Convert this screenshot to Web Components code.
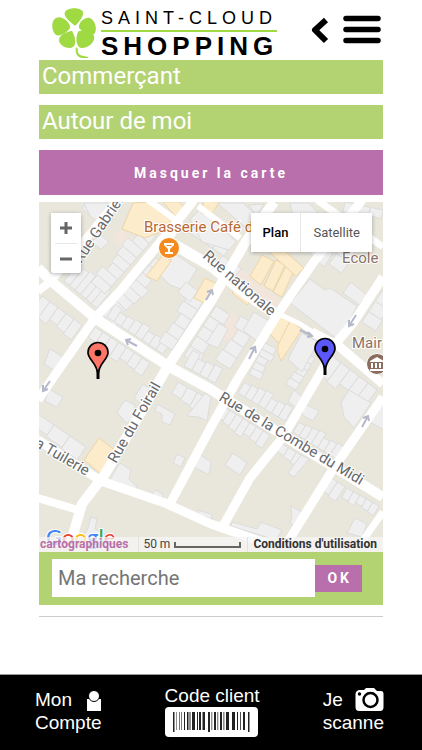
<!DOCTYPE html>
<html lang="fr">
<head>
<meta charset="utf-8">
<meta name="viewport" content="width=device-width, initial-scale=1">
<title>Saint-Cloud Shopping</title>
<style>
    :root {
        --green: #b3d272;
        --purple: #b86fab;
        --lime: #9fda43;
    }

    body {
        margin: 0;
        background: #fff;
        font-family: Roboto, "Liberation Sans", sans-serif;
    }
</style>
</head>
<body>
<shop-page>
    <shop-header slot="header"></shop-header>
    <title-bar>Commerçant</title-bar>
    <title-bar>Autour de moi</title-bar>
    <map-toggle>Masquer la carte</map-toggle>
    <div>
        <street-map></street-map>
        <search-bar placeholder="Ma recherche">OK</search-bar>
    </div>
    <shop-footer slot="footer"></shop-footer>
</shop-page>

<script>
class ShopPage extends HTMLElement {
    connectedCallback() {
        this.attachShadow({mode: 'open'}).innerHTML = `
            <style>
                :host {
                    display: flex;
                    flex-direction: column;
                    min-height: 100vh;
                }

                main {
                    display: flex;
                    flex-direction: column;
                    gap: 11px;
                    padding: 0 39px 24px;
                }

                hr {
                    width: 100%;
                    margin: 0;
                    border: 0;
                    border-top: 1px solid #ccc;
                }

                slot[name="footer"] {
                    display: block;
                    margin-top: auto;
                }
            </style>
            <slot name="header"></slot>
            <main>
                <slot></slot>
                <hr>
            </main>
            <slot name="footer"></slot>`;
    }
}

class ShopHeader extends HTMLElement {
    connectedCallback() {
        this.attachShadow({mode: 'open'}).innerHTML = `
            <style>
                :host {
                    display: flex;
                    justify-content: space-between;
                    height: 60px;
                    padding: 0 41px 0 51px;
                }

                a {
                    display: flex;
                    gap: 4px;
                    padding-top: 7px;
                    color: #000;
                    font-family: "Liberation Sans", Arial, sans-serif;
                    text-decoration: none;
                }

                a svg {
                    width: 46px;
                    height: 52px;
                }

                .name {
                    display: flex;
                    flex-direction: column;
                    white-space: nowrap;
                }

                .top {
                    border-bottom: 2px solid var(--lime);
                    margin-right: 4px;
                    font-size: 18px;
                    line-height: 23px;
                    letter-spacing: 5px;
                }

                .bottom {
                    font-size: 26px;
                    font-weight: bold;
                    line-height: 28px;
                    letter-spacing: 5px;
                }

                nav {
                    display: flex;
                    align-items: flex-start;
                    gap: 14px;
                    padding-top: 14px;
                }

                button {
                    display: block;
                    padding: 0;
                    border: 0;
                    background: none;
                }

                button svg {
                    display: block;
                }
            </style>
            <a href="#">
                <svg viewBox="51 7 46 52" fill="#9fda43" aria-hidden="true">
                    <path d="M74 25C69 21 63 16 65 12C68 7 81 7 83 12C84 16 79 22 76 25Q75 26 74 25Z"/>
                    <path d="M70 28C68 32 60 37 56 35C51 31 51 20 56 18C62 15 69 22 70 26Z"/>
                    <path d="M79 26C80 21 85 17 90 18C95 20 98 30 94 34C90 37 83 32 79 28Z"/>
                    <path d="M72 31C75 36 77 44 73 47C69 50 59 46 59 40C59 35 66 32 71 31Z"/>
                    <path d="M79 31C84 30 93 32 94 36C96 42 87 49 81 48C75 46 76 36 78 32Z"/>
                    <path d="M76 47C75 51 76 57 82 58L88 58V57L84 56C79 56 77 52 78 49Z"/>
                </svg>
                <span class="name">
                    <span class="top">SAINT-CLOUD</span>
                    <span class="bottom">SHOPPING</span>
                </span>
            </a>
            <nav>
                <button type="button" aria-label="Retour">
                    <svg width="18" height="32" viewBox="0 0 18 32" fill="none" stroke="#000" stroke-width="6" stroke-linejoin="round"><path d="M15 6L4 16L15 27"/></svg>
                </button>
                <button type="button" aria-label="Menu">
                    <svg width="38" height="32" viewBox="0 0 38 32" stroke="#000" stroke-width="5.500" stroke-linecap="round"><path d="M3 4.500H35M3 15.500H35M3 26.500H35"/></svg>
                </button>
            </nav>`;
    }
}

class TitleBar extends HTMLElement {
    connectedCallback() {
        this.attachShadow({mode: 'open'}).innerHTML = `
            <style>
                :host {
                    display: block;
                    background: var(--green);
                }

                h2 {
                    margin: 0;
                    padding: 0 3px 2px;
                    color: #fff;
                    font-size: 24px;
                    font-weight: 400;
                    line-height: 32px;
                }
            </style>
            <h2><slot></slot></h2>`;
    }
}

class MapToggle extends HTMLElement {
    connectedCallback() {
        this.attachShadow({mode: 'open'}).innerHTML = `
            <style>
                :host {
                    display: block;
                    margin-bottom: -4px;
                }

                button {
                    display: block;
                    width: 100%;
                    height: 45px;
                    padding: 0;
                    border: 0;
                    background: var(--purple);
                    color: #fff;
                    font: bold 14px Roboto, sans-serif;
                    letter-spacing: 3px;
                }
            </style>
            <button type="button"><slot></slot></button>`;
    }
}

// centre lines of the streets, with their width
const STREETS = [
    ['38,268 51,281 95,318 168,366 210,389 300,446 383,497', 10],
    ['118,200 51,281 38,291', 8],
    ['194,200 171,229 121,290 95,318 55,375 38,400', 9],
    ['168,241 211,266 245,293 277,315', 11],
    ['279,314 300,324 316,334', 5],
    ['312,332 340,347 383,384', 9],
    ['148,200 180,223 168,241', 6],
    ['198,206 240,238', 6],
    ['362,200 313,263 277,315 237,380 211,427 171,502', 9],
    ['274,202 245,243 211,301 168,366 105,474 82,504 70,545', 10],
    ['383,277 353,323 337,342', 9],
    ['325,365 283,437 250,478 223,526', 9],
    ['383,397 333,469 289,540', 9],
    ['38,440 101,481 165,503 211,524 265,543', 9],
    ['38,498 78,510', 8],
    ['383,512 361,543', 7],
    ['317,200 383,247', 7]
];

// rows of houses: x1, y1, x2, y2, depth (negative is the left-hand side), number of houses
const HOUSES = [
    [64, 281, 97, 308, -24, 6],
    [105, 294, 162, 229, -20, 9],
    [103, 315, 156, 258, 17, 8],
    [107, 317, 163, 354, -15, 8],
    [95, 327, 150, 363, 17, 7],
    [42, 296, 82, 325, 20, 5],
    [204, 300, 172, 350, 17, 5],
    [216, 306, 184, 356, -18, 5],
    [257, 326, 230, 369, 19, 4],
    [265, 343, 249, 374, -14, 5],
    [184, 366, 215, 383, -18, 4],
    [178, 382, 207, 398, 18, 3],
    [238, 393, 285, 421, -17, 7],
    [223, 406, 270, 435, 17, 7],
    [293, 432, 336, 459, -16, 7],
    [281, 443, 304, 457, 13, 3],
    [330, 477, 345, 487, 19, 2],
    [347, 488, 379, 506, 12, 5],
    [332, 356, 377, 390, 24, 5],
    [38, 414, 86, 447, 17, 3],
    [315, 358, 296, 390, 13, 5],
    [382, 291, 362, 322, -18, 3],
    [352, 233, 329, 264, -17, 3],
    [383, 210, 345, 202, -12, 3],
    [190, 233, 224, 256, -20, 3],
    [216, 264, 234, 278, -13, 2],
    [92, 217, 104, 203, -16, 2]
];

const BLOCKS = {
    grey: [
        '84,203 107,203 113,218 104,226 90,216', '101,235 109,242 101,249 91,242',
        '160,275 175,254 197,269 184,290 170,285', '178,292 186,282 198,291 190,302',
        '190,219 203,207 236,242 229,250 202,242', '217,203 243,203 257,216 244,226',
        '249,205 264,204 256,216', '290,203 309,203 319,214 307,225 293,217',
        '290,303 310,279 325,290 330,288 357,306 343,335 336,338', '343,293 351,282 367,295 359,305',
        '309,252 318,243 333,253 324,267', '288,359 302,333 318,342 302,372',
        '49,389 63,397 57,407 45,401', '50,349 63,357 54,370 44,364',
        '117,412 125,400 135,405 133,419 126,423', '134,398 143,384 152,390 145,407',
        '157,404 175,414 170,425 162,422 162,414 155,411',
        '120,463 131,470 129,479 137,487 136,493 109,481', '150,496 156,490 163,494 162,502 151,499',
        '187,416 205,393 211,397 207,421 199,417', '177,454 185,458 181,467 173,463',
        '199,454 211,462 209,475 194,467', '198,510 211,514 213,519 198,515',
        '303,403 319,411 313,421 302,415', '233,453 247,463 240,475 225,465',
        '301,455 309,459 294,477 288,473', '291,506 304,513 296,527 290,523 292,516',
        '355,518 367,524 362,537 347,533', '232,522 257,529 261,522 282,530 276,540 231,526',
        '81,540 88,528 91,517 97,519 95,529 105,534 104,543', '341,403 349,390 371,403 354,428 344,417',
        '366,420 380,401 390,409 390,433', '288,401 294,390 305,399 298,409',
        '206,343 219,323 228,329 218,348', '243,330 254,312 269,321 257,341'
    ],
    yellow: [
        '122,229 133,203 151,202 174,218 163,231 145,238', '163,202 179,202 188,211 178,219',
        '204,201 219,202 211,216 201,213', '146,276 163,255 171,261 157,281',
        '194,298 205,278 217,284 206,304', '233,254 238,247 244,251 237,263',
        '250,276 262,255 274,261 261,285', '264,286 276,260 285,265 273,291',
        '273,292 286,266 294,271 282,297', '268,251 275,242 304,268 296,276',
        '268,332 281,315 292,321 280,344', '278,345 290,321 302,329 281,361 278,353',
        '84,460 99,438 116,451 101,474', '232,293 239,285 253,298 247,305'
    ],
    pink: [
        '113,236 122,229 136,240 123,254', '236,265 281,300 272,311 229,276',
        '210,323 233,313 242,320 231,342 222,339'
    ]
};

class StreetMap extends HTMLElement {
    row([x1, y1, x2, y2, depth, count]) {
        const dx = x2 - x1;
        const dy = y2 - y1;
        const len = Math.hypot(dx, dy);
        const nx = -dy / len;
        const ny = dx / len;
        let out = '';
        for (let i = 0; i < count; i++) {
            // the backs of neighbouring houses do not line up
            const d = depth * (1 - ((i * 7 + count) % 4) * 0.09);
            const ax = x1 + dx * i / count;
            const ay = y1 + dy * i / count;
            const bx = x1 + dx * (i + 1) / count;
            const by = y1 + dy * (i + 1) / count;
            out += `<path d="M${ax} ${ay}L${bx} ${by}L${bx + nx * d} ${by + ny * d}L${ax + nx * d} ${ay + ny * d}Z"/>`;
        }
        return out;
    }

    blocks(name) {
        return BLOCKS[name].map(points => `<polygon points="${points}"/>`).join('');
    }

    pin(x, y, color) {
        return `<g transform="translate(${x} ${y})">
            <path d="M0 37V28" stroke="#000" stroke-width="3"/>
            <path d="M0 33C-1 20 -10 18 -10 10.500A10 10 0 0 1 10 10.500C10 18 1 20 0 33Z" fill="${color}" stroke="#000" stroke-width="1.700"/>
            <circle cy="11" r="3.300" fill="#000"/>
        </g>`;
    }

    connectedCallback() {
        this.attachShadow({mode: 'open'}).innerHTML = `
            <style>
                :host {
                    display: block;
                    position: relative;
                    overflow: hidden;
                }

                .map {
                    display: block;
                    width: 100%;
                    height: 350px;
                    background: #e9e7dc;
                    font-family: Roboto, sans-serif;
                }

                button {
                    display: block;
                    padding: 0;
                    border: 0;
                    background: #fff;
                }

                .zoom,
                .types {
                    position: absolute;
                    top: 11px;
                    display: flex;
                    border-radius: 2px;
                    background: #fff;
                    box-shadow: 0 1px 4px rgba(0, 0, 0, .3);
                }

                .zoom {
                    left: 12px;
                    flex-direction: column;
                    width: 30px;
                }

                .zoom button {
                    height: 30px;
                }

                .zoom button + button {
                    margin: 0 4px;
                    border-top: 1px solid #e6e6e6;
                }

                .zoom svg {
                    display: block;
                    margin: auto;
                }

                .types {
                    right: 11px;
                }

                .types button {
                    height: 39px;
                    padding: 0 12px;
                    color: #565656;
                    font: 13px Roboto, sans-serif;
                }

                .types button:first-child {
                    border-right: 1px solid #e6e6e6;
                    color: #000;
                    font-weight: 500;
                }

                .legal {
                    position: absolute;
                    right: 0;
                    bottom: 0;
                    left: 0;
                    display: flex;
                    justify-content: space-between;
                    background: rgba(245, 245, 245, .75);
                    color: #444;
                    font-size: 12px;
                    line-height: 15px;
                    white-space: nowrap;
                }

                .legal a {
                    padding: 0 6px 0 1px;
                    color: #333;
                    font-weight: bold;
                    text-decoration: none;
                }

                .legal a:first-child {
                    color: var(--purple);
                }

                .scale {
                    display: flex;
                    align-items: center;
                    gap: 4px;
                    padding: 0 6px 0 4px;
                    border: solid #e3e3df;
                    border-width: 0 1px;
                }

                .scale i {
                    width: 63px;
                    height: 4px;
                    border: solid #666;
                    border-width: 0 2px 2px;
                }
            </style>
            <svg class="map" viewBox="39 202 344 350" preserveAspectRatio="xMidYMid slice">
                <g fill="#f2e6dc">${this.blocks('pink')}</g>
                <g fill="#efefef" stroke="#dcdcdc">${HOUSES.map(house => this.row(house)).join('')}${this.blocks('grey')}</g>
                <g fill="#fceccb" stroke="#ecd5a8">${this.blocks('yellow')}</g>
                <g fill="none" stroke="#fff" stroke-linejoin="round">
                    ${STREETS.map(([points, width]) => `<polyline points="${points}" stroke-width="${width}"/>`).join('')}
                </g>
                <g fill="none" stroke="#b5b8cb" stroke-width="2">
                    <path d="M137 346L126 340M131 339L126 340L128 345M206 300L212 290M207 292L212 290L213 295M249 359L255 347M250 349L255 347L256 353M300 330L312 336M308 332L312 336L307 337M356 315L349 326M349 320L349 326L354 324M362 427L368 416M363 418L368 416L369 421M50 381L43 391M43 385L43 391L48 389"/>
                </g>
                <g fill="#68686b" stroke="#fff" stroke-width="2" paint-order="stroke" font-size="15">
                    <text transform="translate(81 264) rotate(-56)">Rue Gabriel</text>
                    <text transform="translate(202 257) rotate(41)">Rue nationale</text>
                    <text transform="translate(116 464) rotate(-60)">Rue du Foirail</text>
                    <text transform="translate(218 400) rotate(31)">Rue de la Combe du Midi</text>
                    <text transform="translate(86 476) rotate(30)" text-anchor="end">la Tuilerie</text>
                    <text x="144" y="232" fill="#b9672d">Brasserie Café de</text>
                    <text x="342" y="263" fill="#8b7065">Ecole</text>
                    <text x="352" y="348" fill="#8b7065">Mair</text>
                </g>
                <circle cx="169" cy="248" r="10.500" fill="#f58a1f" stroke="#fff"/>
                <path d="M164 243H174V245L170 249V252H173V254H165V252H168V249L164 245ZM166 245H172L171 246H167Z" fill="#fff" fill-rule="evenodd"/>
                <circle cx="377" cy="364" r="10.500" fill="#8b6d60" stroke="#fff"/>
                <path d="M370 361L377 357L384 361V362H370ZM371 363H373V368H371ZM375 363H377V368H375ZM379 363H381V368H379ZM370 369H384V371H370Z" fill="#fff"/>
                ${this.pin(98, 342, '#fd7567')}
                ${this.pin(325, 338, '#5c57fb')}
                <text x="46" y="545" font-family="Lato, sans-serif" font-size="22" font-weight="500" stroke="#fff" stroke-width="2" paint-order="stroke"><tspan fill="#4285f4">G</tspan><tspan fill="#ea4335">o</tspan><tspan fill="#fbbc05">o</tspan><tspan fill="#4285f4">g</tspan><tspan fill="#34a853">l</tspan><tspan fill="#ea4335">e</tspan></text>
            </svg>
            <div class="zoom">
                <button type="button" aria-label="Zoom avant"><svg width="12" height="12" stroke="#666" stroke-width="3"><path d="M0 6H12M6 0V12"/></svg></button>
                <button type="button" aria-label="Zoom arrière"><svg width="12" height="12" stroke="#666" stroke-width="3"><path d="M0 6H12"/></svg></button>
            </div>
            <div class="types">
                <button type="button">Plan</button>
                <button type="button">Satellite</button>
            </div>
            <div class="legal">
                <a href="#">cartographiques</a>
                <span class="scale">50 m <i></i></span>
                <a href="#">Conditions d'utilisation</a>
            </div>`;
    }
}

class SearchBar extends HTMLElement {
    connectedCallback() {
        this.attachShadow({mode: 'open'}).innerHTML = `
            <style>
                :host {
                    display: block;
                    background: var(--green);
                }

                form {
                    display: flex;
                    align-items: center;
                    padding: 7px 21px 8px 13px;
                }

                input {
                    box-sizing: border-box;
                    flex: 1;
                    min-width: 0;
                    height: 38px;
                    padding: 0 6px;
                    border: 0;
                    border-radius: 0;
                    background: #fff;
                    font: 20px Roboto, sans-serif;
                }

                input::placeholder {
                    color: #757575;
                }

                button {
                    height: 27px;
                    padding: 0 10px 0 12px;
                    border: 0;
                    background: var(--purple);
                    color: #fff;
                    font: bold 14px Roboto, sans-serif;
                    letter-spacing: 3px;
                }
            </style>
            <form>
                <input type="text" aria-label="${this.getAttribute('placeholder')}" placeholder="${this.getAttribute('placeholder')}">
                <button type="button"><slot></slot></button>
            </form>`;
    }
}

class ShopFooter extends HTMLElement {
    connectedCallback() {
        this.attachShadow({mode: 'open'}).innerHTML = `
            <style>
                :host {
                    display: block;
                    border-top: 1px solid #999;
                    background: #000;
                    font-family: "Liberation Sans", Arial, sans-serif;
                }

                nav {
                    display: flex;
                    justify-content: space-between;
                    padding: 9px 38px 13px 35px;
                }

                a {
                    color: #fff;
                    font-size: 19px;
                    line-height: 23px;
                    text-decoration: none;
                    white-space: nowrap;
                }

                a > span {
                    display: flex;
                    justify-content: space-between;
                }

                a.side {
                    padding-top: 4px;
                }

                svg {
                    display: block;
                }
            </style>
            <nav>
                <a class="side" href="#">
                    <span>Mon
                        <svg width="16" height="23" viewBox="0 0 16 23" fill="#fff"><path d="M1 11H15V23H1Z"/><circle cx="8" cy="8" r="5.500" stroke="#000"/></svg>
                    </span>
                    Compte
                </a>
                <a href="#">
                    Code client
                    <svg width="93" height="30" viewBox="0 0 93 30">
                        <rect width="93" height="30" rx="4" fill="#fff"/>
                        <path fill="#222" d="M8 5h1.500v20h-1.500zM11 5h.5v18h-.5zM14 5h.6v18h-.6zM16 5h.6v18h-.6zM19 5h1v18h-1zM22 5h1.500v18h-1.500zM24.500 5h1v18h-1zM27 5h3v18h-3zM32 5h1v18h-1zM34 5h2v18h-2zM37.500 5h2.500v18h-2.500zM43 5h2v20h-2zM46.500 5h.7v18h-.7zM49 5h2v18h-2zM52.500 5h.7v18h-.7zM55 5h2v18h-2zM58.500 5h.8v18h-.8zM61 5h3v18h-3zM67 5h3v18h-3zM72 5h1v18h-1zM75 5h.8v18h-.8zM78 5h2v18h-2zM83 5h1.500v20h-1.500z"/>
                    </svg>
                </a>
                <a class="side" href="#">
                    <span>Je
                        <svg width="29" height="23" viewBox="0 0 29 23"><path d="M4 2H9L11 0H19L22 3H26Q28.500 3 28.500 6V19Q28.500 23 25 23H4Q0.500 23 0.500 19V6Q0.500 3 4 2Z" fill="#fff"/><circle cx="15.500" cy="12" r="7" fill="#fff" stroke="#000" stroke-width="2.500"/><circle cx="4.500" cy="6" r="1.700" fill="#000"/></svg>
                    </span>
                    scanne
                </a>
            </nav>`;
    }
}

customElements.define('shop-page', ShopPage);
customElements.define('shop-header', ShopHeader);
customElements.define('title-bar', TitleBar);
customElements.define('map-toggle', MapToggle);
customElements.define('street-map', StreetMap);
customElements.define('search-bar', SearchBar);
customElements.define('shop-footer', ShopFooter);
</script>
</body>
</html>
